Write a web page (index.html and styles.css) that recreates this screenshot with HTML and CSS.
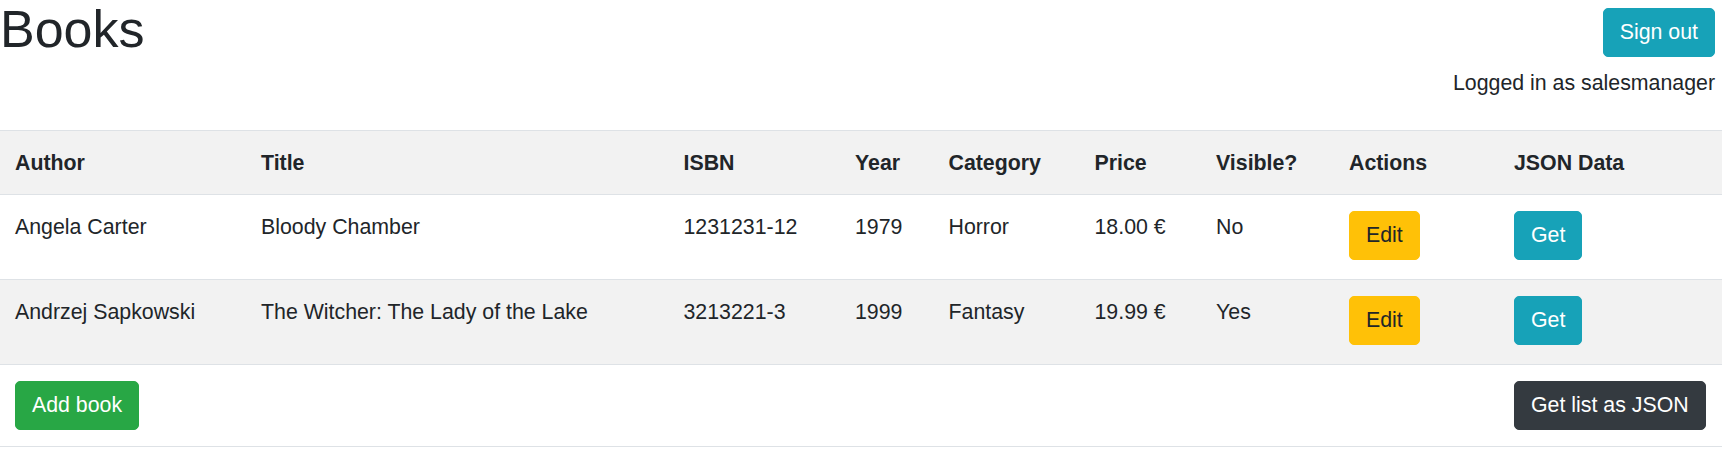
FILE: index.html
```html
<!DOCTYPE html>
<html lang="en">
<head>
<meta charset="utf-8">
<title>Books</title>
<link rel="stylesheet" href="styles.css">
</head>
<body>
<header class="page-header">
  <h1 class="page-title">Books</h1>
  <div class="user-box">
    <button class="btn btn-info">Sign out</button>
    <p class="user-info">Logged in as salesmanager</p>
  </div>
</header>
<table class="book-table">
  <colgroup>
    <col class="c-author"><col class="c-title"><col class="c-isbn"><col class="c-year"><col class="c-category"><col class="c-price"><col class="c-visible"><col class="c-actions"><col class="c-json">
  </colgroup>
  <thead>
    <tr>
      <th>Author</th><th>Title</th><th>ISBN</th><th>Year</th><th>Category</th><th>Price</th><th>Visible?</th><th>Actions</th><th>JSON Data</th>
    </tr>
  </thead>
  <tbody>
    <tr>
      <td>Angela Carter</td><td>Bloody Chamber</td><td>1231231-12</td><td>1979</td><td>Horror</td><td>18.00 €</td><td>No</td>
      <td><button class="btn btn-warning cell-btn">Edit</button></td>
      <td><button class="btn btn-info cell-btn">Get</button></td>
    </tr>
    <tr>
      <td>Andrzej Sapkowski</td><td>The Witcher: The Lady of the Lake</td><td>3213221-3</td><td>1999</td><td>Fantasy</td><td>19.99 €</td><td>Yes</td>
      <td><button class="btn btn-warning cell-btn">Edit</button></td>
      <td><button class="btn btn-info cell-btn">Get</button></td>
    </tr>
  </tbody>
  <tfoot>
    <tr>
      <td colspan="8"><button class="btn btn-success">Add book</button></td>
      <td><button class="btn btn-dark">Get list as JSON</button></td>
    </tr>
  </tfoot>
</table>
</body>
</html>
```

FILE: styles.css
```css
* { box-sizing: border-box; }

body {
  margin: 0;
  font-family: "Liberation Sans", Arial, sans-serif;
  font-size: 21.33px;
  line-height: 32px;
  color: #212529;
  background: #fff;
}

.page-header {
  display: flex;
  justify-content: space-between;
  align-items: flex-start;
  padding-right: 7px;
  margin-bottom: 31px;
}

.page-title {
  margin: 0;
  font-size: 52px;
  line-height: 58px;
  font-weight: normal;
}

.user-box {
  display: flex;
  flex-direction: column;
  align-items: flex-end;
  padding-top: 8px;
}

.user-info {
  margin: 10px 0 0;
}

.btn {
  display: inline-block;
  font-family: inherit;
  font-size: 21.33px;
  line-height: 32px;
  padding: 7px 16px 8px;
  border: 1px solid transparent;
  border-radius: 5px;
  cursor: pointer;
}

.btn-info { background: #17a2b8; border-color: #17a2b8; color: #fff; }
.btn-warning { background: #ffc107; border-color: #ffc107; color: #212529; }
.btn-success { background: #28a745; border-color: #28a745; color: #fff; }
.btn-dark { background: #343a40; border-color: #343a40; color: #fff; }

.cell-btn { margin-bottom: 3px; }

.book-table {
  width: 100%;
  border-collapse: collapse;
  table-layout: fixed;
}

.c-author { width: 245px; }
.c-title { width: 422.5px; }
.c-isbn { width: 171.5px; }
.c-year { width: 93.5px; }
.c-category { width: 146px; }
.c-price { width: 121.5px; }
.c-visible { width: 133px; }
.c-actions { width: 165px; }
.c-json { width: 224px; }

.book-table th,
.book-table td {
  padding: 16px;
  text-align: left;
  vertical-align: top;
  border-top: 1px solid #dee2e6;
  white-space: nowrap;
}

.book-table th:first-child,
.book-table td:first-child {
  padding-left: 15px;
}

.book-table th {
  font-weight: bold;
  padding-bottom: 15px;
}

.book-table thead tr { background: #f2f2f2; }
.book-table tbody tr:nth-child(even) { background: #f2f2f2; }

.book-table tfoot td {
  border-bottom: 1px solid #dee2e6;
}
```
